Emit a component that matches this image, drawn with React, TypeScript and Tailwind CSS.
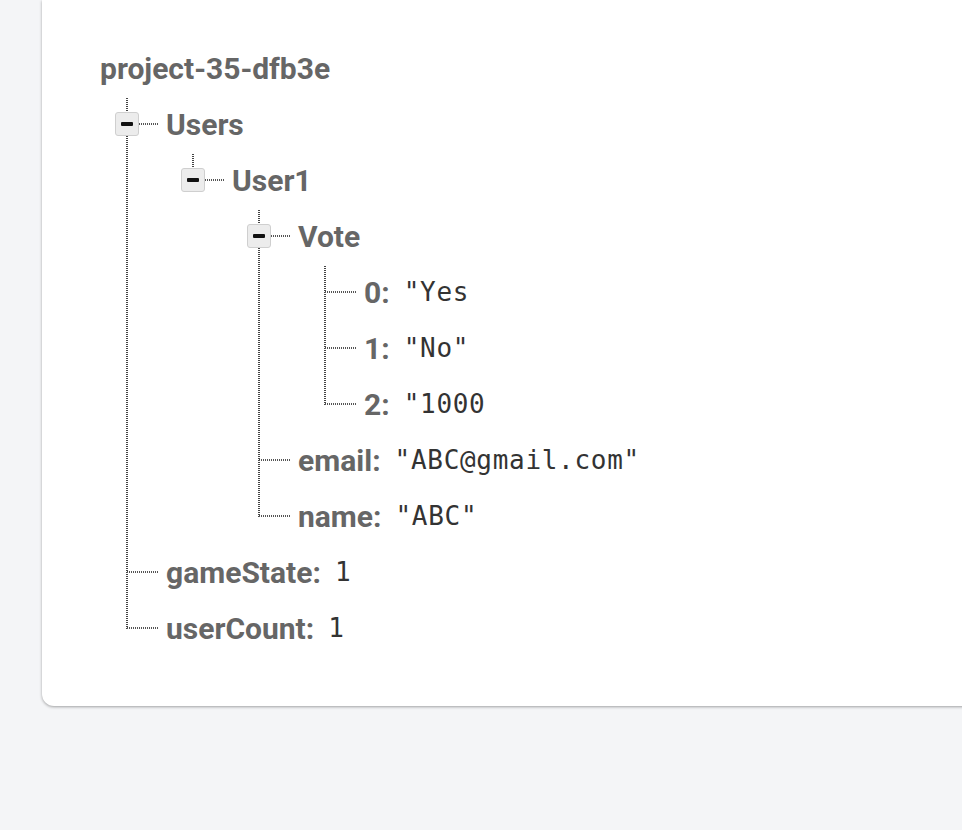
import React from "react";

type Node = { key: string; value?: string; children?: Node[] };

const tree: Node[] = [
  {
    key: "Users",
    children: [
      {
        key: "User1",
        children: [
          {
            key: "Vote",
            children: [
              { key: "0", value: '"Yes' },
              { key: "1", value: '"No"' },
              { key: "2", value: '"1000' },
            ],
          },
          { key: "email", value: '"ABC@gmail.com"' },
          { key: "name", value: '"ABC"' },
        ],
      },
    ],
  },
  { key: "gameState", value: "1" },
  { key: "userCount", value: "1" },
];

const keyFont = { fontFamily: "Roboto, 'Liberation Sans', sans-serif" };
const monoFont = { fontFamily: "'DejaVu Sans Mono', 'Liberation Mono', monospace" };

function Item({ node, first, last }: { node: Node; first: boolean; last: boolean }) {
  const hasKids = !!node.children;
  return (
    <div className="relative">
      {last ? (
        <div
          className={`absolute left-0 w-[2px] -translate-x-1/2 bg-[repeating-linear-gradient(to_bottom,#444_0_1px,transparent_1px_2px)] ${
            first ? "top-[2px] h-[27px]" : "top-0 h-[29px]"
          }`}
        />
      ) : (
        <div
          className={`absolute left-0 bottom-0 w-[2px] -translate-x-1/2 bg-[repeating-linear-gradient(to_bottom,#444_0_1px,transparent_1px_2px)] ${
            first ? "top-[2px]" : "top-0"
          }`}
        />
      )}
      <div className="flex h-14 items-center">
        <div className="relative h-full w-[39px] shrink-0">
          <div className="absolute left-0 top-[27px] h-[2px] w-[31px] bg-[repeating-linear-gradient(to_right,#555_0_1px,transparent_1px_2px)]" />
          {hasKids && (
            <div className="absolute left-[-12px] top-[16px] flex h-[24px] w-[24px] items-center justify-center rounded-[3px] border border-[#cfcfcf] bg-[#ececec]">
              <div className="h-[4px] w-[12px] rounded-[1px] bg-[#111]" />
            </div>
          )}
        </div>
        <span className="text-[30px] font-bold text-[#666]" style={keyFont}>
          {node.key}
          {node.value !== undefined ? ":" : ""}
        </span>
        {node.value !== undefined && (
          <span className="ml-[14px] text-[26px] tracking-[0.7px] text-[#333]" style={monoFont}>
            {node.value}
          </span>
        )}
      </div>
      {hasKids && <List nodes={node.children!} indent />}
    </div>
  );
}

function List({ nodes, indent }: { nodes: Node[]; indent?: boolean }) {
  return (
    <div className={indent ? "ml-[66px]" : "ml-[27px]"}>
      {nodes.map((n, i) => (
        <Item key={n.key} node={n} first={i === 0} last={i === nodes.length - 1} />
      ))}
    </div>
  );
}

export default function App() {
  return (
    <div className="h-[830px] w-[962px] overflow-hidden bg-[#f4f5f7]">
      <div className="ml-[42px] w-[940px] rounded-bl-[12px] bg-white pb-[50px] pl-[58px] pt-[40px] shadow-[0_1px_3px_rgba(0,0,0,0.35)]">
        <div className="flex h-14 items-center">
          <span className="text-[30px] font-bold text-[#666]" style={keyFont}>
            project-35-dfb3e
          </span>
        </div>
        <List nodes={tree} />
      </div>
    </div>
  );
}
